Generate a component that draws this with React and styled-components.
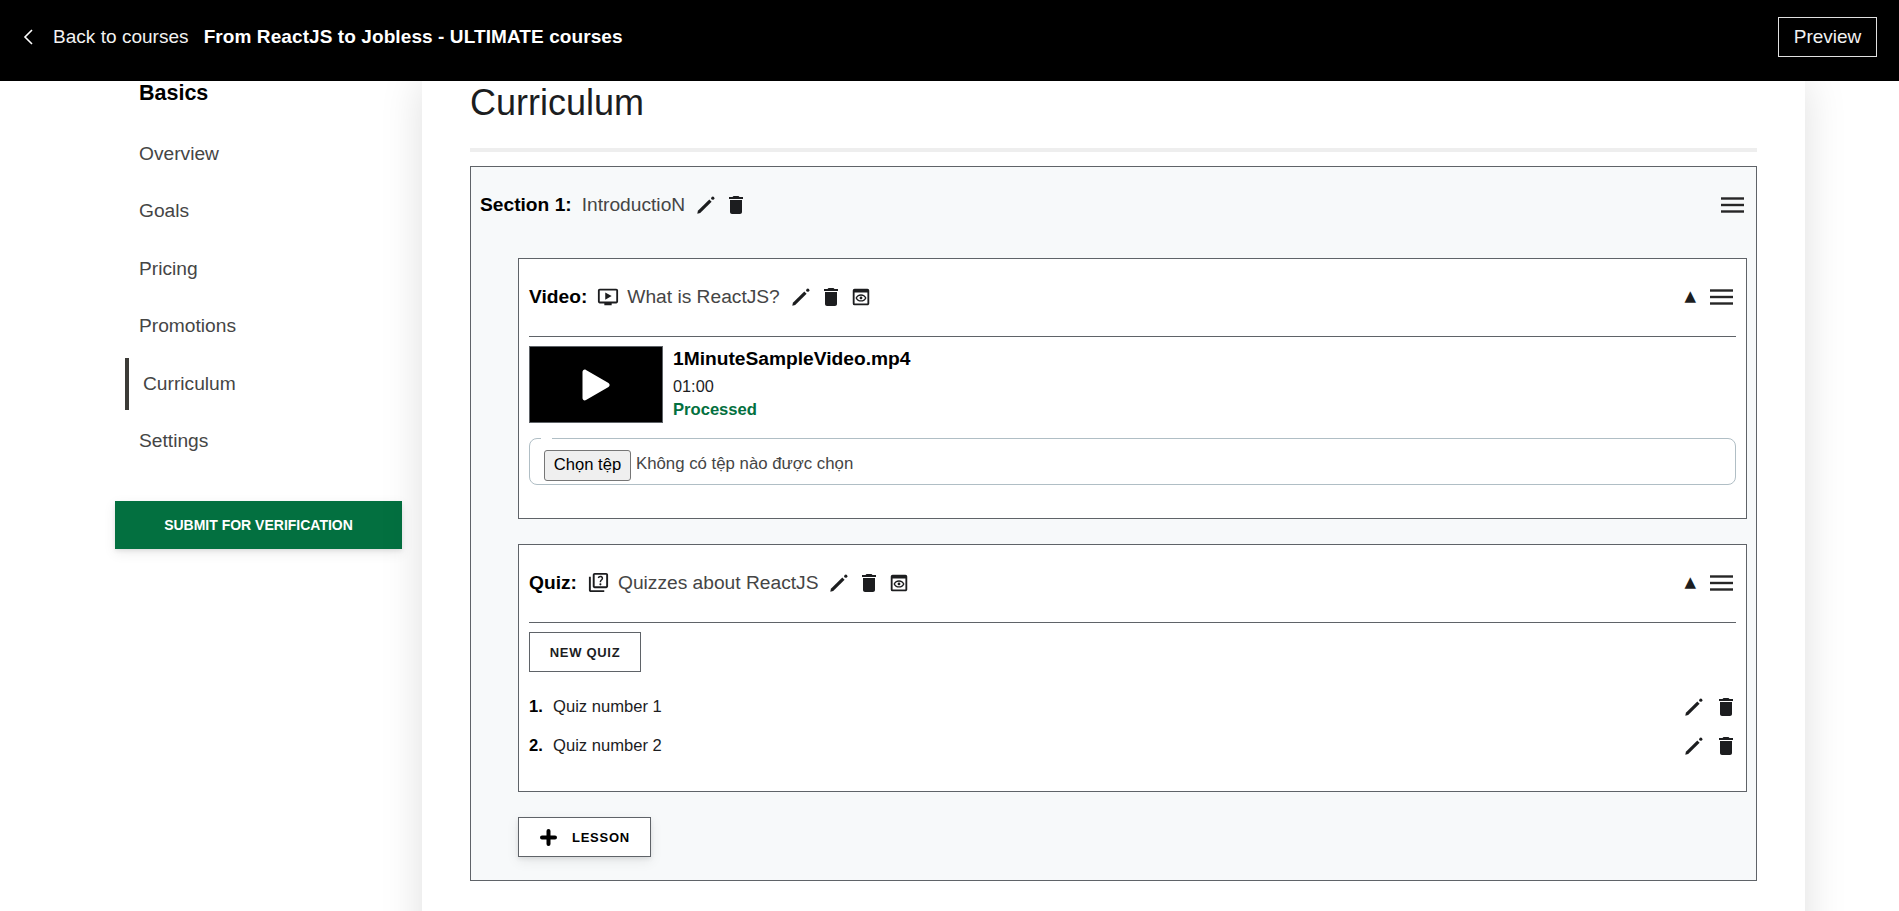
import React from 'react'
import styled, { createGlobalStyle } from 'styled-components'
import { MdDelete, MdOutlinePreview, MdOutlineOndemandVideo, MdOutlineQuiz } from 'react-icons/md'

const GlobalStyle = createGlobalStyle`
  html, body {
    margin: 0;
    height: 100%;
    overflow: hidden;
    background: #fff;
    font-family: "Liberation Sans", Arial, sans-serif;
    color: #1c1d1f;
  }
  * { box-sizing: border-box; }
`

const PencilIcon = () => (
  <svg width="18" height="18" viewBox="0 0 18 18" fill="#1c1d1f">
    <path d="M0.3 17.7 L0.9 14.7 L12.3 3.4 L14.6 5.7 L3.2 17.1 Z" />
    <circle cx="15.8" cy="2.2" r="1.6" />
  </svg>
)

const MenuIcon = () => (
  <svg width="23" height="16" viewBox="0 0 23 16" fill="#262626">
    <rect x="0" y="0.3" width="23" height="2.4" />
    <rect x="0" y="6.8" width="23" height="2.4" />
    <rect x="0" y="13.3" width="23" height="2.4" />
  </svg>
)

const ChevronIcon = () => (
  <svg width="12" height="16" viewBox="0 0 12 16" fill="none" stroke="#fff" strokeWidth="1.6">
    <path d="M10 1 L3 8 L10 15" />
  </svg>
)

const PlayIcon = () => (
  <svg width="28" height="32" viewBox="0 0 28 32" fill="#fff">
    <path d="M0.5 3 C0.5 1 2.5 0 4 1 L26.5 14 C28 15 28 17 26.5 18 L4 31 C2.5 32 0.5 31 0.5 29 Z" />
  </svg>
)

const PlusIcon = () => (
  <svg width="17" height="17" viewBox="0 0 17 17" stroke="#000" strokeWidth="4" strokeLinecap="round">
    <path d="M8.5 2 V15 M2 8.5 H15" />
  </svg>
)

const IconRow = ({ preview }) => (
  <Actions>
    <PencilIcon />
    <TrashBtn><MdDelete size={24} /></TrashBtn>
    {preview && <MdOutlinePreview size={22} />}
  </Actions>
)

const NAV = ['Overview', 'Goals', 'Pricing', 'Promotions', 'Curriculum', 'Settings']

export default function App() {
  return (
    <>
      <GlobalStyle />
      <TopBar>
        <BackGroup>
          <ChevronIcon />
          <BackLink>Back to courses</BackLink>
          <CourseName>From ReactJS to Jobless - ULTIMATE courses</CourseName>
        </BackGroup>
        <PreviewButton>Preview</PreviewButton>
      </TopBar>
      <Main>
        <Sidebar>
          <SideTitle>Basics</SideTitle>
          {NAV.map((n) => (
            <NavItem key={n} $active={n === 'Curriculum'}>{n}</NavItem>
          ))}
          <SubmitButton>SUBMIT FOR VERIFICATION</SubmitButton>
        </Sidebar>
        <Card>
          <Heading>Curriculum</Heading>
          <Rule />
          <Section>
            <SectionHead>
              <HeadLeft>
                <Label>Section 1:</Label>
                <Title>IntroductioN</Title>
                <IconRow />
              </HeadLeft>
              <MenuIcon />
            </SectionHead>

            <Lesson>
              <LessonHead>
                <HeadLeft>
                  <Label>Video:</Label>
                  <TypeIcon><MdOutlineOndemandVideo size={22} /></TypeIcon>
                  <Title>What is ReactJS?</Title>
                  <IconRow preview />
                </HeadLeft>
                <HeadRight>
                  <Caret>▲</Caret>
                  <MenuIcon />
                </HeadRight>
              </LessonHead>
              <VideoRow>
                <Thumb><PlayIcon /></Thumb>
                <VideoInfo>
                  <FileName>1MinuteSampleVideo.mp4</FileName>
                  <Duration>01:00</Duration>
                  <Status>Processed</Status>
                </VideoInfo>
              </VideoRow>
              <FileField>
                <FileButton>Chọn tệp</FileButton>
                <FileStatus>Không có tệp nào được chọn</FileStatus>
              </FileField>
            </Lesson>

            <QuizLesson>
              <LessonHead>
                <HeadLeft>
                  <Label>Quiz:</Label>
                  <TypeIcon><MdOutlineQuiz size={23} /></TypeIcon>
                  <Title>Quizzes about ReactJS</Title>
                  <IconRow preview />
                </HeadLeft>
                <HeadRight>
                  <Caret>▲</Caret>
                  <MenuIcon />
                </HeadRight>
              </LessonHead>
              <NewQuizButton>NEW QUIZ</NewQuizButton>
              <QuizList>
                {['Quiz number 1', 'Quiz number 2'].map((q, i) => (
                  <QuizItem key={q}>
                    <QuizName><b>{i + 1}.</b><span>{q}</span></QuizName>
                    <IconRow />
                  </QuizItem>
                ))}
              </QuizList>
            </QuizLesson>

            <LessonButton><PlusIcon /><span>LESSON</span></LessonButton>
          </Section>
        </Card>
      </Main>
    </>
  )
}

const TopBar = styled.header`
  position: relative;
  z-index: 5;
  height: 81px;
  background: #000;
  color: #fff;
  display: flex;
  align-items: flex-start;
  justify-content: space-between;
  padding: 0 22px;
`

const BackGroup = styled.div`
  display: flex;
  align-items: center;
  height: 73px;
`

const BackLink = styled.span`
  font-size: 19px;
  letter-spacing: 0.03px;
  margin-left: 19px;
  color: #f2f2f2;
`

const CourseName = styled.span`
  font-size: 19px;
  letter-spacing: 0.09px;
  font-weight: 700;
  margin-left: 15px;
`

const PreviewButton = styled.button`
  width: 99px;
  height: 40px;
  margin-top: 17px;
  background: transparent;
  border: 1px solid #e0e0e0;
  color: #f2f2f2;
  font-family: inherit;
  font-size: 19px;
  padding: 0;
`

const Main = styled.main`
  display: flex;
  align-items: flex-start;
  padding-left: 115px;
  height: 830px;
  overflow: hidden;
`

const Sidebar = styled.aside`
  width: 287px;
  flex: none;
  margin-right: 20px;
`

const SideTitle = styled.div`
  font-size: 21.5px;
  font-weight: 700;
  line-height: 22px;
  height: 22px;
  margin: 1px 0 24px 24px;
  color: #000;
`

const NavItem = styled.div`
  height: 52px;
  margin: 0 0 5.4px 10px;
  padding-left: 14px;
  display: flex;
  align-items: center;
  font-size: 19.2px;
  color: #454545;
  border-left: ${(p) => (p.$active ? '4px solid #3c3b37' : 'none')};
`

const SubmitButton = styled.button`
  display: block;
  width: 287px;
  height: 48px;
  margin: 34px 0 20px;
  background: #037040;
  color: #fff;
  border: none;
  font-family: inherit;
  font-size: 14px;
  font-weight: 700;
  box-shadow: 0 2px 4px rgba(0, 0, 0, 0.08), 0 4px 12px rgba(0, 0, 0, 0.08);
`

const Card = styled.div`
  width: 1383px;
  flex: none;
  min-height: 900px;
  padding: 0 48px;
  background: #fff;
  box-shadow: 0 0 40px rgba(0, 0, 0, 0.13);
`

const Heading = styled.h1`
  margin: 0;
  height: 67px;
  font-size: 36px;
  font-weight: 400;
  line-height: 44px;
  color: #1c1d1f;
`

const Rule = styled.div`
  height: 4px;
  background: #eeeeee;
  margin-bottom: 14px;
`

const Section = styled.section`
  height: 715px;
  background: #f7f9fa;
  border: 1px solid #5f6368;
  padding: 0 9px;
`

const SectionHead = styled.div`
  height: 75px;
  display: flex;
  align-items: center;
  justify-content: space-between;
  margin-bottom: 16px;
  padding-right: 3px;
`

const HeadLeft = styled.div`
  display: flex;
  align-items: center;
`

const HeadRight = styled.div`
  display: flex;
  align-items: center;
  gap: 14px;
  padding-right: 3px;
`

const Label = styled.span`
  font-size: 19.2px;
  font-weight: 700;
  color: #000;
`

const Title = styled.span`
  font-size: 19.2px;
  color: #454545;
  margin-left: 10px;
`

const TypeIcon = styled.span`
  display: flex;
  margin-left: 10px;
  color: #1c1d1f;
  & + span { margin-left: 8px; }
`

const Actions = styled.div`
  display: flex;
  align-items: center;
  margin-left: 12px;
  color: #1c1d1f;
`

const TrashBtn = styled.span`
  display: flex;
  margin: 0 7px 0 9px;
`

const Lesson = styled.div`
  margin-left: 38px;
  height: 261px;
  background: #fff;
  border: 1px solid #5f6368;
  padding: 0 10px;
`

const QuizLesson = styled(Lesson)`
  height: 248px;
  margin-top: 25px;
`

const LessonHead = styled.div`
  height: 78px;
  padding-bottom: 2px;
  display: flex;
  align-items: center;
  justify-content: space-between;
  border-bottom: 1px solid #5f6368;
`

const Caret = styled.span`
  font-family: "DejaVu Sans", sans-serif;
  font-size: 15px;
  line-height: 1;
  color: #1c1d1f;
`

const VideoRow = styled.div`
  display: flex;
  margin-top: 9px;
`

const Thumb = styled.div`
  width: 134px;
  height: 77px;
  background: #000;
  border: 1px solid #5f6368;
  display: flex;
  align-items: center;
  justify-content: center;
`

const VideoInfo = styled.div`
  margin-left: 10px;
`

const FileName = styled.div`
  font-size: 19.2px;
  font-weight: 700;
  line-height: 26px;
  color: #000;
`

const Duration = styled.div`
  font-size: 16.3px;
  line-height: 28px;
  color: #1c1d1f;
`

const Status = styled.div`
  font-size: 16.6px;
  font-weight: 700;
  line-height: 20px;
  color: #037040;
`

const FileField = styled.div`
  position: relative;
  margin-top: 15px;
  height: 47px;
  border: 1px solid #b0bec5;
  border-radius: 8px;
  padding: 7px 0 0 14px;
  display: flex;
  align-items: center;
  &::before {
    content: '';
    position: absolute;
    top: -1px;
    left: 11px;
    width: 11px;
    height: 1px;
    background: #fff;
  }
`

const FileButton = styled.button`
  width: 87px;
  height: 31px;
  padding: 0;
  background: #efefef;
  border: 1px solid #767676;
  border-radius: 3px;
  font-family: inherit;
  font-size: 16.6px;
  color: #000;
`

const FileStatus = styled.span`
  margin: -3px 0 0 5px;
  font-size: 16.8px;
  color: #454545;
`

const NewQuizButton = styled.button`
  display: block;
  width: 112px;
  height: 40px;
  margin-top: 9px;
  background: #fff;
  border: 1px solid #5f6368;
  font-family: inherit;
  font-size: 13px;
  font-weight: 700;
  letter-spacing: 0.7px;
  color: #1c1d1f;
  padding: 0;
`

const QuizList = styled.div`
  margin-top: 15px;
`

const QuizItem = styled.div`
  height: 39px;
  display: flex;
  align-items: center;
  justify-content: space-between;
  ${TrashBtn} { margin: 0 -2px 0 11px; }
`

const QuizName = styled.div`
  display: flex;
  font-size: 16.6px;
  color: #1c1d1f;
  b { color: #000; width: 24px; }
`

const LessonButton = styled.button`
  display: flex;
  align-items: center;
  width: 133px;
  height: 40px;
  margin: 25px 0 0 38px;
  padding: 0 0 0 21px;
  background: #fff;
  border: 1px solid #5f6368;
  font-family: inherit;
  font-size: 13px;
  font-weight: 700;
  letter-spacing: 0.75px;
  color: #000;
  box-shadow: 0 2px 4px rgba(0, 0, 0, 0.08), 0 4px 12px rgba(0, 0, 0, 0.08);
  span { margin-left: 15px; }
`
